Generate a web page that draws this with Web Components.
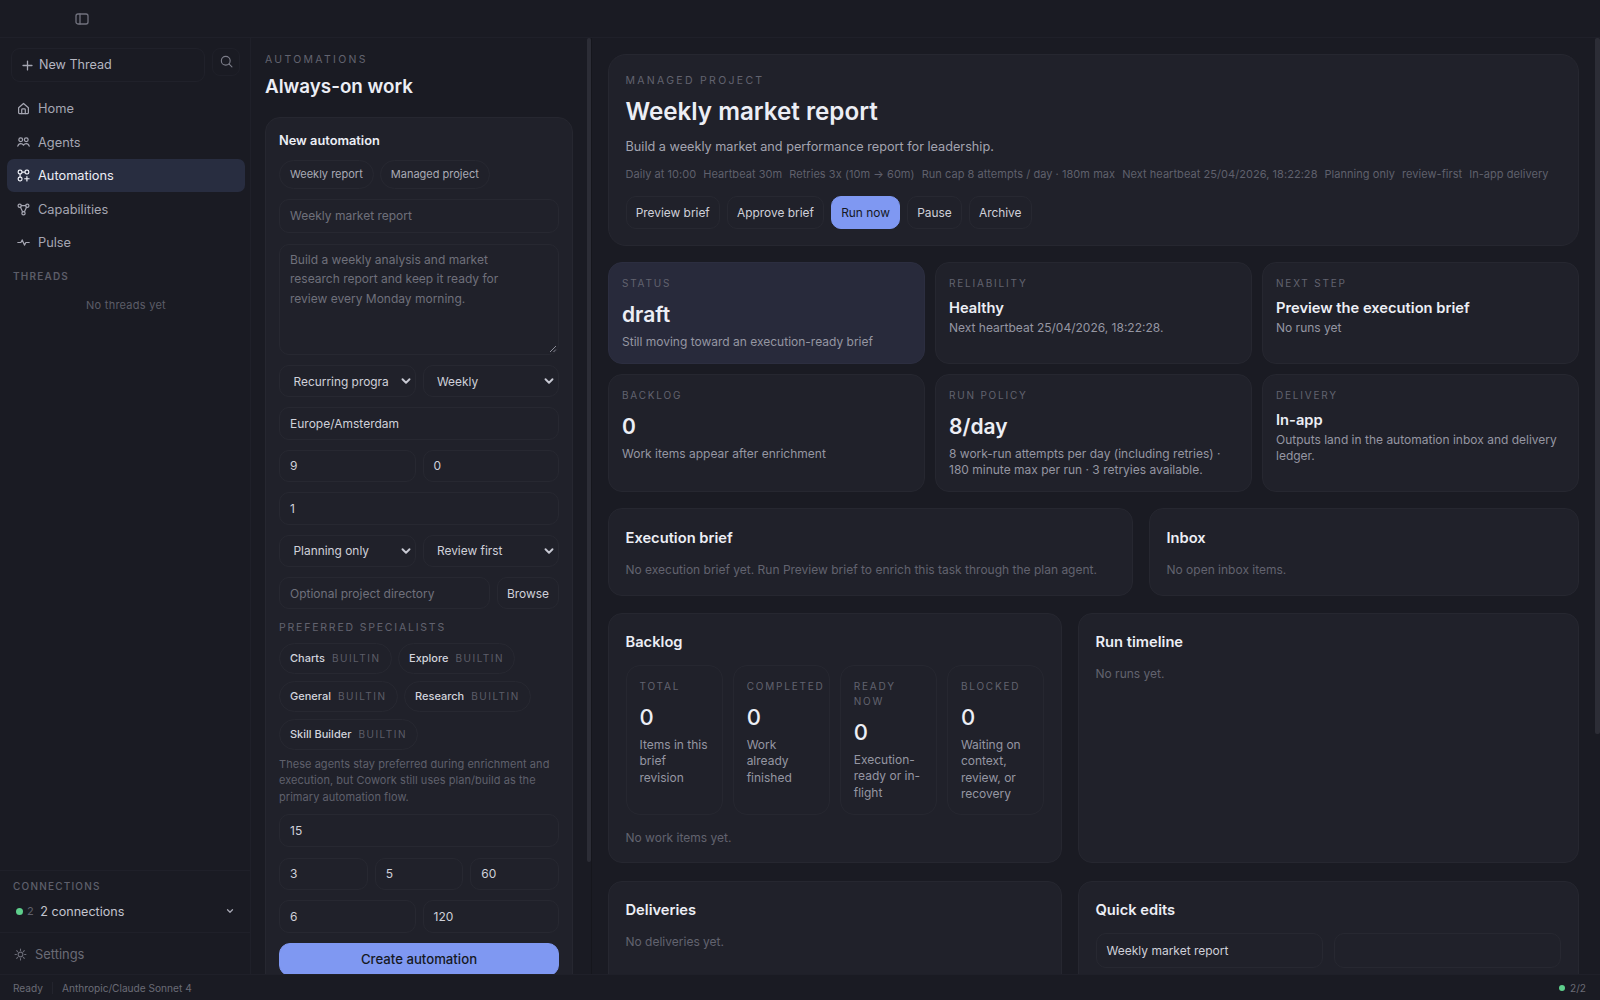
<!DOCTYPE html>
<html lang="en">
<head>
<meta charset="utf-8">
<title>Automations</title>
<style>
  html, body { margin: 0; height: 100%; background: #1a1b23; overflow: hidden; }
  body { font-family: Inter, "Liberation Sans", sans-serif; color: #e8e9f0; }
</style>
</head>
<body>
<app-shell>
  <title-bar slot="top"></title-bar>
  <side-bar slot="side">
    <nav-item icon="home">Home</nav-item>
    <nav-item icon="agents">Agents</nav-item>
    <nav-item icon="automations" active>Automations</nav-item>
    <nav-item icon="capabilities">Capabilities</nav-item>
    <nav-item icon="pulse">Pulse</nav-item>
  </side-bar>
  <form-panel slot="panel"></form-panel>
  <detail-view slot="main"></detail-view>
  <status-bar slot="bottom"></status-bar>
</app-shell>

<script>
const icons = {
  panel: '<rect x="2" y="3" width="12" height="10" rx="2"/><path d="M6 3v10"/>',
  plus: '<path d="M8 2.5v11M2.5 8h11"/>',
  search: '<circle cx="7.2" cy="7.2" r="4.7"/><path d="M10.6 10.6l3.2 3.2"/>',
  home: '<path d="M2 7 8 1.800 14 7v6.200a1 1 0 0 1-1 1H3a1 1 0 0 1-1-1z"/><path d="M5.800 14.200V9.500a1 1 0 0 1 1-1h2.400a1 1 0 0 1 1 1v4.700"/>',
  agents: '<circle cx="4.600" cy="4.500" r="2.300"/><circle cx="11.400" cy="4.500" r="2.300"/><path d="M1 12.500c.5-2 1.900-3 3.700-3 1.400 0 2.500.6 3.300 1.800.8-1.200 1.900-1.800 3.300-1.800 1.800 0 3.200 1 3.700 3"/>',
  automations: '<rect x="1.500" y="1.500" width="4.600" height="4.600" rx="1.800"/><rect x="9.900" y="1.500" width="4.600" height="4.600" rx="1.800"/><rect x="1.500" y="9.900" width="4.600" height="4.600" rx="1.800"/><path d="M6.100 3.800h3.800M3.800 6.100v3.800M12.200 9.300v5.400M9.500 12h5.400"/>',
  capabilities: '<circle cx="3.300" cy="3.300" r="2"/><circle cx="12.700" cy="3.300" r="2"/><circle cx="8" cy="12.700" r="2"/><path d="M5.300 3.300h5.400M4.300 5.100l2.700 5.900M11.700 5.100 9 11"/>',
  pulse: '<path d="M1 8h3.800l1.600-3.200 2.800 6.400 1.700-3.200H15"/>',
  sun: '<circle cx="8" cy="8" r="2.900"/><path d="M8 1.300v1.700M8 13v1.700M1.300 8H3M13 8h1.700M3.300 3.300l1.200 1.200M11.500 11.500l1.200 1.200M3.300 12.700l1.200-1.200M11.500 4.500l1.200-1.200"/>',
  chevron: '<path d="M4 6l4 4 4-4"/>'
}
function svg(name, size, width) {
  return `<svg viewBox="0 0 16 16" width="${size}" height="${size}" fill="none" stroke="currentColor" stroke-width="${width || 1.5}" stroke-linecap="round" stroke-linejoin="round">${icons[name]}</svg>`
}

// small helper: every element is a class with an open shadow root
function define(name, css, html) {
  customElements.define(name, class extends HTMLElement {
    constructor() {
      super()
      const shadow = this.attachShadow({ mode: 'open' })
      shadow.innerHTML = `<style>${css}</style>${typeof html === 'function' ? html(this) : html}`
    }
  })
}

define('app-shell', `
  :host { display: flex; flex-direction: column; height: 100vh; overflow: hidden; }
  .body { flex: 1; min-height: 0; display: flex; }
`, `
  <slot name="top"></slot>
  <div class="body"><slot name="side"></slot><slot name="panel"></slot><slot name="main"></slot></div>
  <slot name="bottom"></slot>
`)

define('title-bar', `
  :host { display: flex; align-items: center; flex: none; height: 38px; box-sizing: border-box; padding-left: 74px; border-bottom: 1px solid #1f2029; color: #71727e; }
  svg { display: block; }
`, () => svg('panel', 16, 1.3))

define('status-bar', `
  :host { display: flex; align-items: center; flex: none; height: 26px; box-sizing: border-box; padding: 0 14px 0 13px; border-top: 1px solid #1f2029; font-size: 10.150px; color: #6a6b76; }
  .sep { width: 1px; height: 12px; margin: 0 9px; background: #23242d; }
  .right { margin-left: auto; display: flex; align-items: center; gap: 5px; }
  .dot { width: 6px; height: 6px; border-radius: 50%; background: #5ecf8c; }
`, `
  <span>Ready</span><span class="sep"></span><span>Anthropic/Claude Sonnet 4</span>
  <span class="right"><span class="dot"></span><span>2/2</span></span>
`)

define('side-bar', `
  :host { display: flex; flex-direction: column; flex: none; width: 251px; box-sizing: border-box; border-right: 1px solid #1f2029; font-size: 12.600px; }
  .top { display: flex; gap: 7px; padding: 10px 10px 0 11px; }
  .new { flex: 1; display: flex; align-items: center; gap: 5px; height: 34px; box-sizing: border-box; padding-left: 9px; border: 1px solid #20212a; border-radius: 9px; color: #b5b6c1; }
  .new span { margin-top: -1px; }
  .new svg { color: #a5a6b2; }
  .find { display: flex; align-items: center; justify-content: center; width: 28px; height: 28px; box-sizing: border-box; border: 1px solid #1f2029; border-radius: 8px; color: #7c7d89; }
  .find svg { margin-top: -2px; }
  nav { display: flex; flex-direction: column; padding: 9.800px 5px 0 7px; }
  .heading { margin: 10.700px 0 0 13px; font-size: 10px; line-height: 12px; font-weight: 600; letter-spacing: 1.200px; color: #5c5d68; }
  .empty { margin: 16px 5px 0 7px; text-align: center; font-size: 11px; line-height: 14px; letter-spacing: .25px; color: #5c5d68; }
  .conn { margin-top: auto; height: 63px; box-sizing: border-box; padding: 9px 13px 0; border-top: 1px solid #1f2029; border-bottom: 1px solid #1f2029; }
  .conn .heading { margin: 0; font-weight: 500; color: #5f606c; }
  .row { display: flex; align-items: center; height: 20px; margin-top: 9px; color: #c3c4ce; }
  .dot { width: 7px; height: 7px; margin-left: 3px; border-radius: 50%; background: #5ecf8c; }
  .num { margin: 0 6.500px 0 4px; font-size: 11px; color: #5f606c; }
  .row svg { margin-left: auto; margin-right: 2px; color: #a5a6b2; }
  .settings { display: flex; align-items: center; gap: 8px; height: 41px; box-sizing: border-box; padding: 2px 0 0 14px; font-size: 12.900px; color: #6a6b76; }
`, () => `
  <div class="top">
    <div class="new">${svg('plus', 13, 1.600)}<span>New Thread</span></div>
    <div class="find">${svg('search', 15, 1.200)}</div>
  </div>
  <nav><slot></slot></nav>
  <div class="heading">THREADS</div>
  <div class="empty">No threads yet</div>
  <div class="conn">
    <div class="heading">CONNECTIONS</div>
    <div class="row"><span class="dot"></span><span class="num">2</span><span>2 connections</span>${svg('chevron', 10, 2)}</div>
  </div>
  <div class="settings">${svg('sun', 13, 1.300)}<span>Settings</span></div>
`)

define('nav-item', `
  :host { display: flex; align-items: center; gap: 8px; height: 33.500px; box-sizing: border-box; padding-left: 10px; border-radius: 7px; font-size: 12.800px; color: #a5a6b2; }
  :host([active]) { background: #282d40; color: #eceef5; }
  svg { flex: none; }
`, el => svg(el.getAttribute('icon'), 13, 1.500) + '<slot></slot>')

define('ui-chip', `
  :host { display: inline-flex; align-items: center; box-sizing: border-box; height: 28.500px; padding: 0 10px; border: 1px solid #272831; border-radius: 15px; font-size: 11px; color: #a9aab5; white-space: nowrap; }
`, '<slot></slot>')

define('spec-chip', `
  :host { display: inline-flex; align-items: center; gap: 7px; box-sizing: border-box; height: 31px; padding: 0 10px; border: 1px solid #272831; border-radius: 16px; font-size: 11px; font-weight: 500; color: #d2d3dc; white-space: nowrap; }
  span { font-size: 10px; font-weight: 400; letter-spacing: 1.500px; color: #5c5d68; }
`, '<slot></slot><span>BUILTIN</span>')

define('ui-field', `
  :host { display: flex; align-items: center; position: relative; box-sizing: border-box; min-width: 0; height: var(--h, 32.400px); padding: 0 10px; border: 1px solid #272831; border-radius: 10px; font-size: 12px; color: #cfd0d9; white-space: nowrap; overflow: hidden; }
  :host([dim]) { color: #6f707b; }
  :host([select]) { padding-left: 13.500px; font-size: 11.900px; }
  :host([area]) { display: block; padding: 5px 28px 5px 10px; line-height: 19.800px; white-space: normal; }
  svg { position: absolute; right: 2px; top: 50%; margin-top: -7px; color: #c7c8d2; }
  .grip { position: absolute; right: 1px; bottom: 1px; top: auto; margin: 0; color: #8a8b96; }
`, el => {
  if (el.hasAttribute('select')) return `<slot></slot>${svg('chevron', 14, 2.200)}`
  if (el.hasAttribute('area')) return `<slot></slot><svg class="grip" viewBox="0 0 8 8" width="8" height="8" fill="none" stroke="currentColor" stroke-width="1"><path d="M1 7 7 1M4.500 7 7 4.500"/></svg>`
  return '<slot></slot>'
})

define('ui-row', `
  :host { display: grid; grid-template-columns: repeat(2, 1fr); gap: 7px; }
  :host([cols="3"]) { grid-template-columns: repeat(3, 1fr); }
  :host([browse]) { grid-template-columns: 1fr 62px; }
`, '<slot></slot>')

define('ui-button', `
  :host { display: inline-flex; align-items: center; justify-content: center; box-sizing: border-box; height: 33px; padding: 0 9.200px; border: 1px solid #272831; border-radius: 10px; font-size: 11.900px; color: #cfd0d9; white-space: nowrap; }
  :host([primary]) { background: #7f98f2; border-color: #7f98f2; color: #161824; }
`, '<slot></slot>')

define('eyebrow-text', `
  :host { display: block; font-size: 10.500px; line-height: 14px; letter-spacing: var(--track, 2.300px); color: #62636f; }
  :host([tight]) { font-size: 10px; line-height: 12px; letter-spacing: 1.800px; }
`, '<slot></slot>')

define('scroll-thumb', `
  :host { position: absolute; top: 0; right: 0; width: var(--w); height: var(--len); background: #2c2d36; border-radius: 2px; }
`, '')

define('form-panel', `
  :host { display: flex; position: relative; flex: none; width: 341px; min-height: 0; box-sizing: border-box; border-right: 1px solid #15161c; }
  .scroll { flex: 1; min-width: 0; box-sizing: border-box; padding: 15px 18px 14px 14px; overflow-y: auto; scrollbar-width: none; }
  h1 { margin: 7px 0 17px; font-size: 18.800px; line-height: 26px; font-weight: 600; color: #eceef5; }
  .card { display: flex; flex-direction: column; gap: 10px; box-sizing: border-box; min-height: 970px; padding: 15px 13px 14px; background: #20212a; border: 1px solid #262730; border-radius: 15px; }
  h2 { margin: 0 0 1px; font-size: 12.800px; line-height: 16px; font-weight: 600; color: #eceef5; }
  .chips { display: flex; gap: 6px; }
  .specs { display: flex; flex-wrap: wrap; gap: 7px 6.500px; margin-top: -2px; }
  p { margin: -4px 0 -1px; font-size: 11px; line-height: 16.500px; letter-spacing: .05px; color: #5f606c; }
  .create { width: 100%; height: 33px; border-radius: 11px; font-size: 13.200px; font-weight: 500; }
`, `
  <div class="scroll">
  <eyebrow-text>AUTOMATIONS</eyebrow-text>
  <h1>Always-on work</h1>
  <div class="card">
    <h2>New automation</h2>
    <div class="chips"><ui-chip>Weekly report</ui-chip><ui-chip>Managed project</ui-chip></div>
    <ui-field dim style="--h:34px;margin-bottom:1px">Weekly market report</ui-field>
    <ui-field dim area style="--h:111px;margin-bottom:.5px">Build a weekly analysis and market research report and keep it ready for review every Monday morning.</ui-field>
    <ui-row><ui-field select>Recurring progra</ui-field><ui-field select>Weekly</ui-field></ui-row>
    <ui-field>Europe/Amsterdam</ui-field>
    <ui-row><ui-field>9</ui-field><ui-field>0</ui-field></ui-row>
    <ui-field>1</ui-field>
    <ui-row><ui-field select>Planning only</ui-field><ui-field select>Review first</ui-field></ui-row>
    <ui-row browse><ui-field dim>Optional project directory</ui-field><ui-button style="height:32.400px">Browse</ui-button></ui-row>
    <eyebrow-text style="--track:1.800px;margin-top:1.500px">PREFERRED SPECIALISTS</eyebrow-text>
    <div class="specs">
      <spec-chip>Charts</spec-chip><spec-chip>Explore</spec-chip>
      <spec-chip>General</spec-chip><spec-chip>Research</spec-chip>
      <spec-chip>Skill Builder</spec-chip>
    </div>
    <p>These agents stay preferred during enrichment and execution, but Cowork still uses plan/build as the primary automation flow.</p>
    <ui-field>15</ui-field>
    <ui-row cols="3" style="margin-top:1px"><ui-field>3</ui-field><ui-field>5</ui-field><ui-field>60</ui-field></ui-row>
    <ui-row><ui-field>6</ui-field><ui-field>120</ui-field></ui-row>
    <ui-button class="create" primary>Create automation</ui-button>
  </div>
  </div>
  <scroll-thumb style="--w:4px;--len:824px"></scroll-thumb>
`)

define('stat-card', `
  :host { display: block; box-sizing: border-box; padding: 14px 13px 13px; background: #20212a; border: 1px solid #262730; border-radius: 14px; }
  :host([accent]) { background: #282a3b; border-color: #2c2e40; }
  .value { margin-top: 12px; font-size: 21px; line-height: 28px; font-weight: 600; color: #eceef5; }
  .sub { margin-top: 5px; font-size: 12px; line-height: 16.300px; color: #9596a2; }
  :host([compact]) .value { margin-top: 9px; font-size: 14.700px; line-height: 20px; }
  :host([compact]) .sub { margin-top: 2px; }
`, el => `
  <eyebrow-text tight>${el.getAttribute('label')}</eyebrow-text>
  <div class="value">${el.getAttribute('value')}</div>
  <div class="sub"><slot></slot></div>
`)

define('mini-stat', `
  :host { display: block; box-sizing: border-box; padding: 13px 13px 12px; border: 1px solid #262730; border-radius: 14px; min-width: 0; }
  eyebrow-text { line-height: 15px; }
  .value { margin-top: 9px; font-size: 22px; line-height: 28px; font-weight: 500; color: #eceef5; }
  .sub { margin-top: 6px; font-size: 12px; line-height: 16.300px; color: #9596a2; }
`, el => `
  <eyebrow-text tight>${el.getAttribute('label')}</eyebrow-text>
  <div class="value">${el.getAttribute('value')}</div>
  <div class="sub"><slot></slot></div>
`)

define('panel-card', `
  :host { display: block; box-sizing: border-box; min-width: 0; padding: 17px 17px 16px 16.500px; background: #20212a; border: 1px solid #262730; border-radius: 14px; }
  h3 { margin: 0 0 11px; font-size: 14.700px; line-height: 22px; font-weight: 600; color: #eceef5; }
`, el => `<h3>${el.getAttribute('heading')}</h3><slot></slot>`)

define('detail-view', `
  :host { display: flex; position: relative; flex: 1; min-width: 0; min-height: 0; }
  .scroll { flex: 1; min-width: 0; overflow-y: auto; scrollbar-width: none; }
  .wrap { display: flex; flex-direction: column; gap: 16px; padding: 16px 21px 16px 16px; }
  .hero { box-sizing: border-box; flex: none; height: 192px; padding: 19px 17px 0 16.500px; background: #20212a; border: 1px solid #262730; border-radius: 18px; }
  h1 { margin: 8px 0 9px; font-size: 24.200px; line-height: 32px; font-weight: 600; color: #eceef5; }
  .desc { font-size: 12.700px; line-height: 20px; color: #a3a4b0; }
  .meta { display: flex; gap: 7px; margin-top: 9px; font-size: 11px; line-height: 16px; letter-spacing: .05px; color: #5f606c; white-space: nowrap; }
  .actions { display: flex; gap: 6.900px; margin-top: 14px; }
  .stats { display: grid; grid-template-columns: repeat(3, 1fr); grid-template-rows: 102px 118px; gap: 10px; }
  .split { display: grid; grid-template-columns: 525px 1fr; gap: 16px; }
  .split.even { grid-template-columns: 454px 1fr; margin-top: 1px; }
  .split.end { margin-top: 2px; }
  .tall { height: 250px; }
  .last { min-height: 400px; }
  .short { height: 88px; padding-top: 18px; }
  .muted { font-size: 12px; line-height: 20px; color: #62636f; }
  .minis { display: grid; grid-template-columns: repeat(4, 1fr); gap: 10px; margin: 12px 0 13px; }
  .edits { display: grid; grid-template-columns: 1fr 1fr; gap: 11px; margin-top: 12px; }
`, `
  <div class="scroll">
  <div class="wrap">
    <div class="hero">
      <eyebrow-text>MANAGED PROJECT</eyebrow-text>
      <h1>Weekly market report</h1>
      <div class="desc">Build a weekly market and performance report for leadership.</div>
      <div class="meta">
        <span>Daily at 10:00</span><span>Heartbeat 30m</span><span>Retries 3x (10m → 60m)</span><span>Run cap 8 attempts / day · 180m max</span><span>Next heartbeat 25/04/2026, 18:22:28</span><span>Planning only</span><span>review-first</span><span>In-app delivery</span>
      </div>
      <div class="actions">
        <ui-button>Preview brief</ui-button><ui-button>Approve brief</ui-button><ui-button primary>Run now</ui-button><ui-button>Pause</ui-button><ui-button>Archive</ui-button>
      </div>
    </div>
    <div class="stats">
      <stat-card accent label="STATUS" value="draft">Still moving toward an execution-ready brief</stat-card>
      <stat-card compact label="RELIABILITY" value="Healthy">Next heartbeat 25/04/2026, 18:22:28.</stat-card>
      <stat-card compact label="NEXT STEP" value="Preview the execution brief">No runs yet</stat-card>
      <stat-card label="BACKLOG" value="0">Work items appear after enrichment</stat-card>
      <stat-card label="RUN POLICY" value="8/day">8 work-run attempts per day (including retries) · 180 minute max per run · 3 retryies available.</stat-card>
      <stat-card compact label="DELIVERY" value="In-app">Outputs land in the automation inbox and delivery ledger.</stat-card>
    </div>
    <div class="split">
      <panel-card class="short" heading="Execution brief"><div class="muted">No execution brief yet. Run Preview brief to enrich this task through the plan agent.</div></panel-card>
      <panel-card class="short" heading="Inbox"><div class="muted">No open inbox items.</div></panel-card>
    </div>
    <div class="split even">
      <panel-card class="tall" heading="Backlog">
        <div class="minis">
          <mini-stat label="TOTAL" value="0">Items in this brief revision</mini-stat>
          <mini-stat label="COMPLETED" value="0">Work already finished</mini-stat>
          <mini-stat label="READY NOW" value="0">Execution-ready or in-flight</mini-stat>
          <mini-stat label="BLOCKED" value="0">Waiting on context, review, or recovery</mini-stat>
        </div>
        <div class="muted">No work items yet.</div>
      </panel-card>
      <panel-card class="tall" heading="Run timeline"><div class="muted">No runs yet.</div></panel-card>
    </div>
    <div class="split even end">
      <panel-card class="last" heading="Deliveries"><div class="muted">No deliveries yet.</div></panel-card>
      <panel-card class="last" heading="Quick edits">
        <div class="edits"><ui-field style="--h:35px">Weekly market report</ui-field><ui-field style="--h:35px"></ui-field></div>
      </panel-card>
    </div>
  </div>
  </div>
  <scroll-thumb style="--w:5px;--len:696px"></scroll-thumb>
`)
</script>
</body>
</html>
